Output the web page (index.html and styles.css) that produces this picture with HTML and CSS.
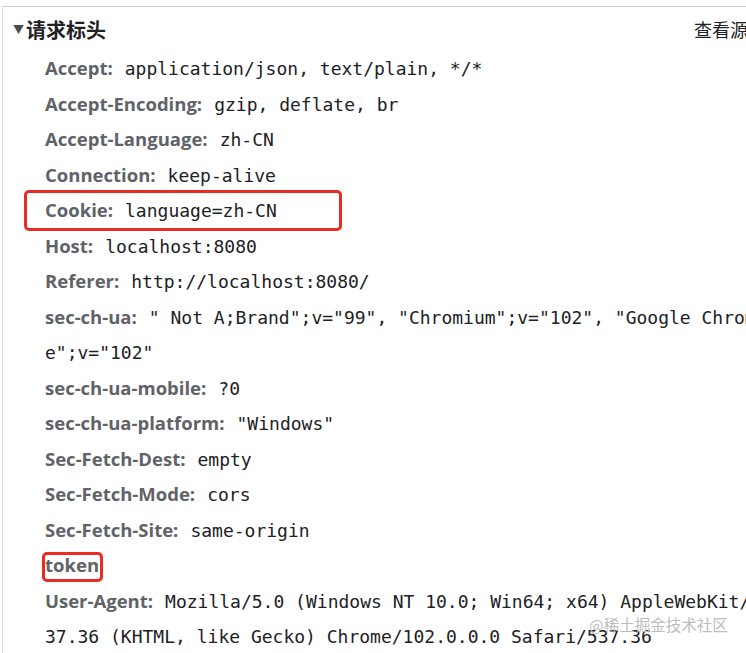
FILE: index.html
```html
<!DOCTYPE html>
<html lang="zh-CN">
<head>
    <meta charset="UTF-8">
    <meta name="viewport" content="width=device-width, initial-scale=1.0">
    <title>请求标头</title>
    <link rel="stylesheet" href="styles.css">
</head>
<body>
    <div class="pane">
        <div class="section">
            <div class="section-head">
                <span class="arrow">&#9660;</span>
                <span class="title">请求标头</span>
                <span class="view-source">查看源代码</span>
            </div>

            <!-- request headers, one per row -->
            <div class="headers">
                <div class="row"><span class="key">Accept:</span><span class="val">application/json, text/plain, */*</span></div>
                <div class="row"><span class="key">Accept-Encoding:</span><span class="val">gzip, deflate, br</span></div>
                <div class="row"><span class="key">Accept-Language:</span><span class="val">zh-CN</span></div>
                <div class="row"><span class="key">Connection:</span><span class="val">keep-alive</span></div>
                <div class="row">
                    <span class="key">Cookie:</span><span class="val">language=zh-CN</span>
                    <span class="mark mark-cookie"></span>
                </div>
                <div class="row"><span class="key">Host:</span><span class="val">localhost:8080</span></div>
                <div class="row"><span class="key">Referer:</span><span class="val">http://localhost:8080/</span></div>
                <div class="row"><span class="key">sec-ch-ua:</span><span class="val">" Not A;Brand";v="99", "Chromium";v="102", "Google Chrom<br>e";v="102"</span></div>
                <div class="row"><span class="key">sec-ch-ua-mobile:</span><span class="val">?0</span></div>
                <div class="row"><span class="key">sec-ch-ua-platform:</span><span class="val">"Windows"</span></div>
                <div class="row"><span class="key">Sec-Fetch-Dest:</span><span class="val">empty</span></div>
                <div class="row"><span class="key">Sec-Fetch-Mode:</span><span class="val">cors</span></div>
                <div class="row"><span class="key">Sec-Fetch-Site:</span><span class="val">same-origin</span></div>
                <div class="row">
                    <span class="key">token</span>
                    <span class="mark mark-token"></span>
                </div>
                <div class="row"><span class="key">User-Agent:</span><span class="val">Mozilla/5.0 (Windows NT 10.0; Win64; x64) AppleWebKit/5<br>37.36 (KHTML, like Gecko) Chrome/102.0.0.0 Safari/537.36</span></div>
            </div>
        </div>

        <div class="watermark">@稀土掘金技术社区</div>
    </div>
</body>
</html>
```

FILE: styles.css
```css
body {
    margin: 0;
    overflow: hidden;
    background: #fff;
    font-family: "Open Sans", "Noto Sans CJK SC", sans-serif;
    color: #202124;
}
.pane {
    position: relative;
    margin-left: 2px;
    height: 653px;
    border-left: 1px solid #d6d6d6;
}
.section {
    width: 790px;
    margin-top: 6px;
    border-top: 1px solid #d0d0d0;
}
.section-head {
    display: flex;
    align-items: center;
    height: 44px;
    padding: 0 9px 0 10px;
}
.arrow {
    font-size: 11px;
    color: #4a4a4a;
    margin-right: 2px;
}
.title {
    font-family: "Noto Sans CJK SC", sans-serif;
    font-size: 20px;
    font-weight: 700;
}
.view-source {
    margin-left: auto;
    font-family: "Noto Sans CJK SC", sans-serif;
    font-size: 18px;
}
.headers {
    padding-left: 42px;
}
.row {
    position: relative;
    line-height: 35.5px;
    font-size: 18px;
    white-space: nowrap;
}
.key {
    font-weight: 700;
    font-size: 18.5px;
    line-height: 1;
    color: #5f6368;
    margin-right: 12px;
}
.val {
    font-family: "DejaVu Sans Mono", monospace;
    font-size: 18px;
    line-height: 1;
    color: #202124;
}
.mark {
    position: absolute;
    box-sizing: border-box;
    border: 3.5px solid #ea2b22;
    border-radius: 5px;
}
.mark-cookie {
    left: -21px;
    top: -3px;
    width: 318px;
    height: 41px;
}
.mark-token {
    left: -3px;
    top: 4px;
    width: 61px;
    height: 30px;
}
.watermark {
    position: absolute;
    left: 586px;
    top: 607px;
    font-family: "Noto Sans CJK SC", sans-serif;
    font-size: 15.5px;
    color: #bdbdbd;
}
```
